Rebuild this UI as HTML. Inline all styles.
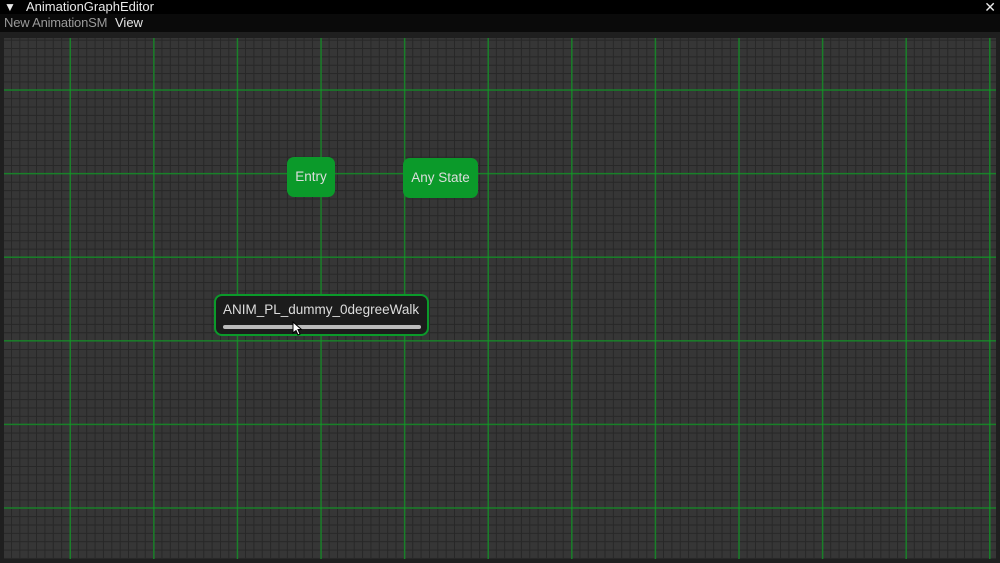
<!DOCTYPE html><html><head><style>
body{margin:0;width:1000px;height:563px;background:#000;overflow:hidden;font-family:"Liberation Sans",sans-serif;position:relative}
.t{position:absolute;left:0;top:0;width:1000px;height:14px;color:#e8e8e8;font-size:13px;line-height:14px}
.m{position:absolute;left:0;top:14px;width:1000px;height:18px;background:#0a0a0a;font-size:13px;line-height:18px;color:#e6e6e6}
.f{position:absolute;left:0;top:32px;width:1000px;height:531px;background:#1f1f1f}
.c{position:absolute;left:4px;top:38px;width:992px;height:521px;background-color:#363636;
background-image:linear-gradient(90deg,rgba(20,150,40,.8) 1.5px,transparent 1.5px),linear-gradient(0deg,rgba(20,150,40,.8) 1.5px,transparent 1.5px),linear-gradient(90deg,#272727 1px,transparent 1px),linear-gradient(0deg,#272727 1px,transparent 1px);
background-size:83.6px 83.6px,83.6px 83.6px,8.36px 8.36px,8.36px 8.36px;
background-position:65.5px 0,0 52.8px,65.5px 0,0 52.8px}
.n{position:absolute;background:#0b9a2a;border-radius:7px;color:#ddd;font-size:13.5px;text-align:center}
</style></head><body>
<div class="t"><span style="position:absolute;left:4px;font-size:12px">▼</span><span style="position:absolute;left:26px">AnimationGraphEditor</span><span style="position:absolute;right:4px;font-size:14px">✕</span></div>
<div class="m"><span style="position:absolute;left:4px;color:#9a9a9a;letter-spacing:-0.2px">New AnimationSM</span><span style="position:absolute;left:115px">View</span></div>
<div class="f"></div>
<div class="c"></div>
<div class="n" style="left:287px;top:157px;width:48px;height:40px;line-height:40px">Entry</div>
<div class="n" style="left:403px;top:158px;width:75px;height:40px;line-height:40px">Any State</div>
<div style="position:absolute;left:214px;top:294px;width:211px;height:38px;background:#1c1c1c;border:2px solid #0b9a2a;border-radius:8px;color:#ddd;font-size:13.5px">
<div style="position:absolute;left:7px;top:6px">ANIM_PL_dummy_0degreeWalk</div>
<div style="position:absolute;left:7px;top:29px;width:198px;height:4px;background:#bbb;border-radius:2px"></div></div>
<svg style="position:absolute;left:292px;top:321px" width="10" height="15"><path d="M1 1L1 12L4 9.5L6 14L8 13L6 8.5L9.5 8.5Z" fill="#fff" stroke="#000" stroke-width="1"/></svg>
</body></html>
